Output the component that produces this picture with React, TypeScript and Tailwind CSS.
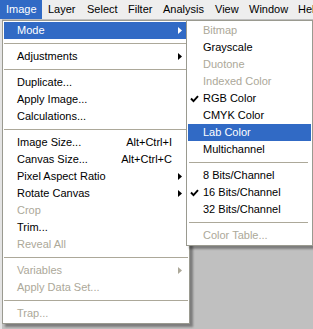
import React from 'react';

type Item =
  | { sep: true }
  | {
      sep?: false;
      label: string;
      shortcut?: string;
      arrow?: boolean;
      disabled?: boolean;
      active?: boolean;
      checked?: boolean;
    };

const MENUBAR = [
  { label: 'Image', w: 'w-[42px]', active: true },
  { label: 'Layer', w: 'w-[39px]' },
  { label: 'Select', w: 'w-[41px]' },
  { label: 'Filter', w: 'w-[35px]' },
  { label: 'Analysis', w: 'w-[52px]' },
  { label: 'View', w: 'w-[34px]' },
  { label: 'Window', w: 'w-[49px]' },
  { label: 'Help', w: 'w-[40px]' },
];

const IMAGE_MENU: Item[] = [
  { label: 'Mode', arrow: true, active: true },
  { sep: true },
  { label: 'Adjustments', arrow: true },
  { sep: true },
  { label: 'Duplicate...' },
  { label: 'Apply Image...' },
  { label: 'Calculations...' },
  { sep: true },
  { label: 'Image Size...', shortcut: 'Alt+Ctrl+I' },
  { label: 'Canvas Size...', shortcut: 'Alt+Ctrl+C' },
  { label: 'Pixel Aspect Ratio', arrow: true },
  { label: 'Rotate Canvas', arrow: true },
  { label: 'Crop', disabled: true },
  { label: 'Trim...' },
  { label: 'Reveal All', disabled: true },
  { sep: true },
  { label: 'Variables', arrow: true, disabled: true },
  { label: 'Apply Data Set...', disabled: true },
  { sep: true },
  { label: 'Trap...', disabled: true },
];

const MODE_MENU: Item[] = [
  { label: 'Bitmap', disabled: true },
  { label: 'Grayscale' },
  { label: 'Duotone', disabled: true },
  { label: 'Indexed Color', disabled: true },
  { label: 'RGB Color', checked: true },
  { label: 'CMYK Color' },
  { label: 'Lab Color', active: true },
  { label: 'Multichannel' },
  { sep: true },
  { label: '8 Bits/Channel' },
  { label: '16 Bits/Channel', checked: true },
  { label: '32 Bits/Channel' },
  { sep: true },
  { label: 'Color Table...', disabled: true },
];

function Arrow() {
  return (
    <svg width="4" height="7" viewBox="0 0 4 7" className="block">
      <polygon points="0,0 4,3.5 0,7" fill="currentColor" />
    </svg>
  );
}

function Check() {
  return (
    <svg width="9" height="8" viewBox="0 0 9 8" className="block">
      <polyline points="1,3.5 3.5,6.2 8,1.2" fill="none" stroke="currentColor" strokeWidth="1.9" />
    </svg>
  );
}

function MenuList({ items, sub }: { items: Item[]; sub?: boolean }) {
  return (
    <>
      {items.map((it, i) => {
        if (it.sep) {
          return (
            <div key={i} className={`h-[9px] flex items-center ${sub ? 'pl-[1px] pr-[3px]' : 'px-0'}`}>
              <div className="h-px w-full bg-[#aca899]" />
            </div>
          );
        }
        const tone = it.active
          ? 'bg-[#316ac5] text-white'
          : it.disabled
            ? 'text-[#aca899]'
            : 'text-black';
        return (
          <div key={i} className={`flex items-center h-[17px] whitespace-nowrap ${tone}`}>
            <div className={`${sub ? 'w-[15px] pl-[2px]' : 'w-[13px]'} shrink-0`}>
              {it.checked && <Check />}
            </div>
            <span className="flex-1">{it.label}</span>
            {it.shortcut && <span>{it.shortcut}</span>}
            <div className="w-[16px] shrink-0 pl-[6px]">{it.arrow && <Arrow />}</div>
          </div>
        );
      })}
    </>
  );
}

export default function App() {
  return (
    <div className="relative w-[313px] h-[329px] overflow-hidden bg-[#c0c0c0] font-['Liberation_Sans',Arial,sans-serif] text-[11px] leading-none">
      <div className="flex h-[19px] bg-[#eeeeee] text-black whitespace-nowrap">
        {MENUBAR.map(m => (
          <div
            key={m.label}
            className={`${m.w} shrink-0 flex items-center pl-[6px] ${m.active ? 'bg-[#316ac5] text-white' : ''}`}
          >
            {m.label}
          </div>
        ))}
      </div>
      <div className="h-full w-[2px] bg-[#e4e4e4]" />

      {/* Image menu */}
      <div className="absolute left-[2px] top-[20px] w-[188px] border border-[#9a9a90] bg-white p-[1px] shadow-[3px_3px_2px_rgba(0,0,0,0.35)]">
        <MenuList items={IMAGE_MENU} />
      </div>

      {/* Mode submenu */}
      <div className="absolute left-[186px] top-[20px] w-[127px] border border-[#9a9a90] bg-white p-[1px] shadow-[3px_3px_2px_rgba(0,0,0,0.35)]">
        <MenuList items={MODE_MENU} sub />
      </div>
    </div>
  );
}
